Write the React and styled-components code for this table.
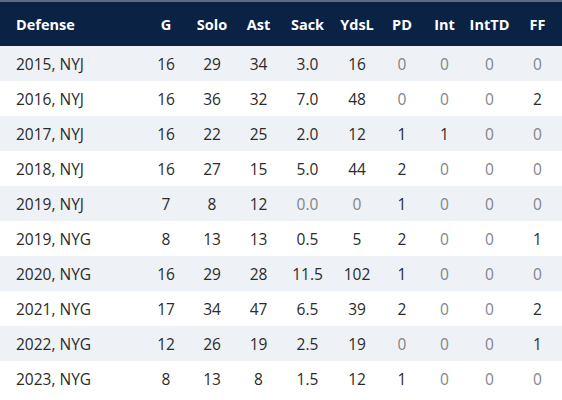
import React from 'react';
import styled, { createGlobalStyle } from 'styled-components';

const GlobalStyle = createGlobalStyle`
  html, body {
    margin: 0;
    padding: 0;
    background: #ffffff;
  }
  body {
    font-family: "Open Sans", "Noto Sans", "Liberation Sans", sans-serif;
  }
`;

const columns = ['G', 'Solo', 'Ast', 'Sack', 'YdsL', 'PD', 'Int', 'IntTD', 'FF'];

const rows = [
  ['2015, NYJ', '16', '29', '34', '3.0', '16', '0', '0', '0', '0'],
  ['2016, NYJ', '16', '36', '32', '7.0', '48', '0', '0', '0', '2'],
  ['2017, NYJ', '16', '22', '25', '2.0', '12', '1', '1', '0', '0'],
  ['2018, NYJ', '16', '27', '15', '5.0', '44', '2', '0', '0', '0'],
  ['2019, NYJ', '7', '8', '12', '0.0', '0', '1', '0', '0', '0'],
  ['2019, NYG', '8', '13', '13', '0.5', '5', '2', '0', '0', '1'],
  ['2020, NYG', '16', '29', '28', '11.5', '102', '1', '0', '0', '0'],
  ['2021, NYG', '17', '34', '47', '6.5', '39', '2', '0', '0', '2'],
  ['2022, NYG', '12', '26', '19', '2.5', '19', '0', '0', '0', '1'],
  ['2023, NYG', '8', '13', '8', '1.5', '12', '1', '0', '0', '0'],
];

const gridCols = '143px 46px 46px 47px 51px 48px 42px 43px 47px 1fr';

const Table = styled.div`
  width: 562px;
  height: 400px;
  overflow: hidden;
  border-top: 2px solid #5b6b82;
`;

const HeadRow = styled.div`
  display: grid;
  grid-template-columns: ${gridCols};
  align-items: center;
  height: 44px;
  background: #0a2244;
  color: #ffffff;
  font-weight: 700;
  font-size: 14.5px;
`;

const Row = styled.div`
  display: grid;
  grid-template-columns: ${gridCols};
  align-items: center;
  height: 35px;
  background: ${({ $shaded }) => ($shaded ? '#eef1f5' : '#ffffff')};
  color: #2b2b2b;
  font-size: 15.5px;
`;

const NameCell = styled.div`
  padding-left: 16px;
  white-space: nowrap;
`;

const Cell = styled.div`
  text-align: center;
  white-space: nowrap;
  color: ${({ $muted }) => ($muted ? '#80858c' : 'inherit')};
`;

const isZero = (v) => parseFloat(v) === 0;

export default function App() {
  return (
    <>
      <GlobalStyle />
      <Table>
        <HeadRow>
          <NameCell>Defense</NameCell>
          {columns.map((c) => (
            <Cell key={c}>{c}</Cell>
          ))}
        </HeadRow>
        {rows.map(([season, ...stats], i) => (
          <Row key={season} $shaded={i % 2 === 0}>
            <NameCell>{season}</NameCell>
            {stats.map((v, j) => (
              <Cell key={j} $muted={isZero(v)}>{v}</Cell>
            ))}
          </Row>
        ))}
      </Table>
    </>
  );
}
